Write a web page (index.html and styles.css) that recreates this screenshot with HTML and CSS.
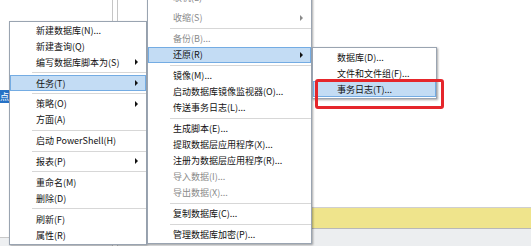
FILE: index.html
```html
<!DOCTYPE html>
<html lang="zh-CN">
<head>
    <meta charset="UTF-8">
    <meta name="viewport" content="width=device-width, initial-scale=1.0">
    <title>任务菜单</title>
    <link rel="stylesheet" href="styles.css">
</head>
<body>
    <div class="screen">
        <div class="explorer">
            <div class="tree">
                <span class="tree-node selected">站点</span>
            </div>
            <div class="explorer-foot"></div>
        </div>
        <div class="splitter"></div>
        <div class="document">
            <div class="doc-body"></div>
            <div class="info-bar"></div>
            <div class="status-bar"></div>
        </div>

        <!-- 数据库右键菜单 -->
        <div class="menu menu-main">
            <div class="menu-item">新建数据库(N)...</div>
            <div class="menu-item">新建查询(Q)</div>
            <div class="menu-item has-sub">编写数据库脚本为(S)</div>
            <div class="menu-sep"></div>
            <div class="menu-item has-sub active">任务(T)</div>
            <div class="menu-sep"></div>
            <div class="menu-item has-sub">策略(O)</div>
            <div class="menu-item">方面(A)</div>
            <div class="menu-sep"></div>
            <div class="menu-item">启动 PowerShell(H)</div>
            <div class="menu-sep"></div>
            <div class="menu-item has-sub">报表(P)</div>
            <div class="menu-sep"></div>
            <div class="menu-item">重命名(M)</div>
            <div class="menu-item">删除(D)</div>
            <div class="menu-sep"></div>
            <div class="menu-item">刷新(F)</div>
            <div class="menu-item">属性(R)</div>
        </div>

        <!-- 任务子菜单 -->
        <div class="menu menu-tasks">
            <div class="menu-item disabled">联机(L)</div>
            <div class="menu-gap"></div>
            <div class="menu-item has-sub disabled">收缩(S)</div>
            <div class="menu-sep"></div>
            <div class="menu-item disabled">备份(B)...</div>
            <div class="menu-item has-sub active">还原(R)</div>
            <div class="menu-sep"></div>
            <div class="menu-item">镜像(M)...</div>
            <div class="menu-item">启动数据库镜像监视器(O)...</div>
            <div class="menu-item">传送事务日志(L)...</div>
            <div class="menu-sep"></div>
            <div class="menu-item">生成脚本(E)...</div>
            <div class="menu-item">提取数据层应用程序(X)...</div>
            <div class="menu-item">注册为数据层应用程序(R)...</div>
            <div class="menu-item disabled">导入数据(I)...</div>
            <div class="menu-item disabled">导出数据(X)...</div>
            <div class="menu-sep"></div>
            <div class="menu-item">复制数据库(C)...</div>
            <div class="menu-sep"></div>
            <div class="menu-item">管理数据库加密(P)...</div>
        </div>

        <!-- 还原子菜单 -->
        <div class="menu menu-restore">
            <div class="menu-item">数据库(D)...</div>
            <div class="menu-item">文件和文件组(F)...</div>
            <div class="menu-item active">事务日志(T)...</div>
        </div>

        <div class="callout"></div>
    </div>
</body>
</html>
```

FILE: styles.css
```css
body {
    margin: 0;
    font-family: "Noto Sans CJK SC", "Noto Sans", sans-serif;
    font-size: 9px;
    background-color: #ffffff;
}
.screen {
    position: relative;
    display: flex;
    width: 531px;
    height: 246px;
    overflow: hidden;
}
.explorer {
    width: 112px;
    border-right: 1px solid #c6c6c6;
    display: flex;
    flex-direction: column;
}
.tree {
    flex: 1;
    padding-top: 90px;
}
.tree-node {
    display: inline-block;
    height: 13px;
    line-height: 13px;
    margin-left: -9px;
    padding-right: 3px;
    color: white;
}
.tree-node.selected {
    background-color: #2672c6;
}
.explorer-foot {
    height: 8px;
    border-top: 1px solid #c8c8c8;
    background-color: #eef0f2;
}
.splitter {
    width: 4px;
}
.document {
    flex: 1;
    border-left: 1px solid #c6c6c6;
    display: flex;
    flex-direction: column;
}
.doc-body {
    flex: 1;
}
.info-bar {
    height: 20px;
    background-color: #efe48c;
    border-top: 1px solid #cfcfcf;
    border-bottom: 1px solid #b8b8b8;
}
.status-bar {
    height: 17px;
    background-color: #eceef0;
}

/* 弹出菜单 */
.menu {
    position: absolute;
    box-sizing: border-box;
    background-color: white;
    border: 1px solid #9aa4b1;
    box-shadow: 1px 1px 2px rgba(0, 0, 0, 0.35);
    color: #111;
}
.menu-main {
    left: 9px;
    top: 21px;
    width: 138px;
    padding: 0 0 1px;
}
.menu-tasks {
    left: 147px;
    top: -12px;
    width: 165px;
    padding: 0 0 1px;
}
.menu-restore {
    left: 312px;
    top: 47px;
    width: 125px;
    padding: 1px 0;
}
.menu-item {
    box-sizing: border-box;
    height: 16.1px;
    display: flex;
    align-items: center;
    padding-left: 25px;
    border: 1px solid transparent;
    white-space: nowrap;
}
.menu-tasks .menu-item {
    padding-left: 24px;
}
.menu-restore .menu-item {
    padding-left: 23px;
}
.menu-item.active {
    background-color: #c3dcf4;
    border-color: #74ace3;
}
.menu-item.disabled {
    color: #8a8a8a;
}
.menu-item.has-sub::after {
    content: "";
    margin-left: auto;
    margin-right: 7px;
    border-left: 3px solid #111;
    border-top: 3px solid transparent;
    border-bottom: 3px solid transparent;
}
.menu-item.disabled.has-sub::after {
    border-left-color: #8a8a8a;
}
.menu-sep {
    height: 4.7px;
    display: flex;
    align-items: center;
    margin-left: 22px;
}
.menu-sep::before {
    content: "";
    flex: 1;
    height: 1px;
    background-color: #d7d7d7;
}
.menu-gap {
    height: 4.7px;
}
.callout {
    position: absolute;
    box-sizing: border-box;
    left: 315px;
    top: 79px;
    width: 129px;
    height: 30px;
    border: 3px solid #e5262b;
    border-radius: 3px;
}
```
